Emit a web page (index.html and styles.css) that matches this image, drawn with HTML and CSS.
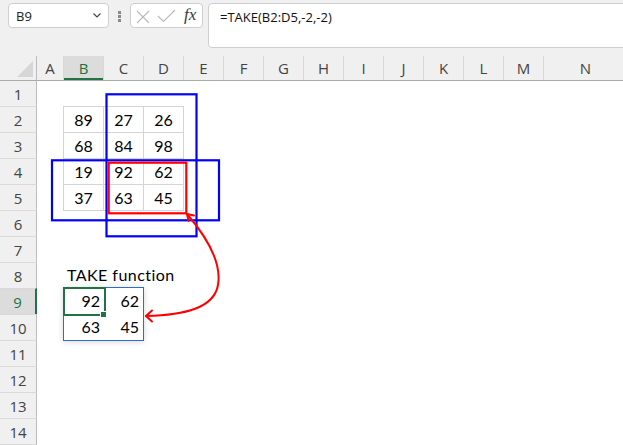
FILE: index.html
```html
<!DOCTYPE html>
<html>
<head>
<meta charset="utf-8">
<link rel="stylesheet" href="styles.css">
</head>
<body>
<div class="app">
  <div class="fbar">
    <div class="namebox">
      <span class="nbtext">B9</span>
      <svg class="chev" width="8" height="5" viewBox="0 0 8 5"><polyline points="0.5,0.5 4,4 7.5,0.5"/></svg>
    </div>
    <div class="dots"><i></i><i></i><i></i></div>
    <div class="fnbox">
      <svg class="xc" width="50" height="23" viewBox="0 0 50 23"><path d="M6 7 L18 19 M18 7 L6 19"/><path d="M27 12 L32.5 17.5 L44 6"/></svg>
      <span class="fx">fx</span>
    </div>
    <div class="formula">=TAKE(B2:D5,-2,-2)</div>
  </div>

  <div class="sheet">
    <div class="corner"><svg width="36" height="24" viewBox="0 0 36 24"><polygon points="33,5 33,21 17,21"/></svg></div>
    <div class="colheads">
      <div class="ch">A</div>
      <div class="ch sel">B</div>
      <div class="ch">C</div>
      <div class="ch">D</div>
      <div class="ch">E</div>
      <div class="ch">F</div>
      <div class="ch">G</div>
      <div class="ch">H</div>
      <div class="ch">I</div>
      <div class="ch">J</div>
      <div class="ch">K</div>
      <div class="ch">L</div>
      <div class="ch">M</div>
      <div class="ch">N</div>
    </div>
    <div class="rowheads">
      <div class="rh">1</div>
      <div class="rh">2</div>
      <div class="rh">3</div>
      <div class="rh">4</div>
      <div class="rh">5</div>
      <div class="rh">6</div>
      <div class="rh">7</div>
      <div class="rh">8</div>
      <div class="rh sel">9</div>
      <div class="rh">10</div>
      <div class="rh">11</div>
      <div class="rh">12</div>
      <div class="rh">13</div>
      <div class="rh">14</div>
      <div class="rh rh-empty"></div>
    </div>
    <div class="body">
      <div class="data">
        <div class="dc">89</div><div class="dc">27</div><div class="dc">26</div>
        <div class="dc">68</div><div class="dc">84</div><div class="dc">98</div>
        <div class="dc">19</div><div class="dc">92</div><div class="dc">62</div>
        <div class="dc">37</div><div class="dc">63</div><div class="dc">45</div>
      </div>
      <div class="label">TAKE function</div>
      <div class="spill">
        <div class="sc active">92</div><div class="sc">62</div>
        <div class="sc">63</div><div class="sc">45</div>
      </div>
    </div>
  </div>

  <svg class="overlay" width="623" height="445" viewBox="0 0 623 445">
    <rect class="blue" x="106.5" y="94.3" width="90" height="142"/>
    <rect class="blue" x="52" y="160.3" width="167" height="60"/>
    <rect class="red" x="108.7" y="162.7" width="77.6" height="50.6"/>
    <path class="arrow" d="M187 214 C205 235 222 262 218 285 C214 308 185 315 146 316"/>
    <polyline class="arrow" points="194,215.5 187,214 188.5,221"/>
    <polyline class="arrow" points="152,310.5 146,316 152,321.5"/>
  </svg>
</div>
</body>
</html>
```

FILE: styles.css
```css
html, body {
  margin: 0;
  padding: 0;
  background: #ffffff;
}

.app {
  position: relative;
  width: 623px;
  height: 445px;
  overflow: hidden;
  font-family: "Open Sans", "Noto Sans", sans-serif;
  color: #222;
}

/* ---------- formula bar ---------- */
.fbar {
  height: 56px;
  box-sizing: border-box;
  background: #f0f0f0;
  display: flex;
  align-items: flex-start;
  padding: 3px 0 0 8px;
  overflow: hidden;
}

.namebox {
  width: 101px;
  height: 25px;
  box-sizing: border-box;
  border: 1px solid #cfcfcf;
  border-radius: 4px;
  background: #fff;
  display: flex;
  align-items: center;
  justify-content: space-between;
  padding: 0 7px 0 7px;
  font-size: 13px;
  line-height: 18px;
  color: #222;
}

.chev polyline {
  fill: none;
  stroke: #444;
  stroke-width: 1.2;
}

.dots {
  width: 3px;
  margin: 0 9px;
  padding-top: 8px;
  display: flex;
  flex-direction: column;
  gap: 1.5px;
}

.dots i {
  display: block;
  width: 2.5px;
  height: 2.5px;
  background: #8a8a8a;
}

.fnbox {
  width: 73px;
  height: 25px;
  box-sizing: border-box;
  border: 1px solid #cfcfcf;
  border-radius: 4px;
  background: #fff;
  display: flex;
  align-items: flex-start;
}

.xc path {
  fill: none;
  stroke: #b9b9b9;
  stroke-width: 1.1;
}

.fx {
  margin-left: 3px;
  font-family: "Liberation Serif", "DejaVu Serif", serif;
  font-style: italic;
  font-size: 17px;
  line-height: 21px;
  color: #3a3a3a;
}

.formula {
  flex: 1;
  margin-left: 5px;
  margin-right: -8px;
  height: 45px;
  box-sizing: border-box;
  border: 1px solid #cfcfcf;
  border-radius: 4px;
  background: #fff;
  padding: 4px 11px 0 11px;
  font-size: 13px;
  line-height: 18px;
  color: #111;
}

/* ---------- sheet ---------- */
.sheet {
  --cols: 26px repeat(12, 40px) 84px;
  display: grid;
  grid-template-columns: 37px 1fr;
  grid-template-rows: 25px 1fr;
  height: 389px;
}

.corner {
  background: #f0f0f0;
  box-sizing: border-box;
  border-right: 1px solid #bcbcbc;
  border-bottom: 1px solid #ababab;
}

.corner svg {
  display: block;
}

.corner polygon {
  fill: #d6d6d6;
}

.colheads {
  display: grid;
  grid-template-columns: var(--cols);
  background: #f0f0f0;
  box-sizing: border-box;
  border-bottom: 1px solid #ababab;
  overflow: hidden;
}

.ch {
  box-sizing: border-box;
  border-left: 1px solid #d8d8d8;
  display: flex;
  align-items: center;
  justify-content: center;
  font-size: 15px;
  color: #444;
}

.ch:first-child {
  border-left: none;
}

.ch.sel {
  background: #dcdcdc;
  color: #217346;
  box-shadow: inset 0 -2px 0 #217346;
}

.rowheads {
  display: flex;
  flex-direction: column;
  background: #f0f0f0;
}

.rh {
  flex: none;
  height: 26px;
  box-sizing: border-box;
  border-top: 1px solid #dadada;
  border-right: 1px solid #bcbcbc;
  display: flex;
  align-items: center;
  justify-content: center;
  font-size: 15px;
  color: #444;
}

.rh:first-child {
  height: 25px;
  border-top: none;
}

.rh.sel {
  background: #dcdcdc;
  color: #217346;
  border-right: 2px solid #217346;
}

.body {
  display: grid;
  grid-template-columns: var(--cols);
  grid-template-rows: 25px repeat(14, 26px);
  background: #fff;
  font-family: "Lato", "Carlito", sans-serif;
  font-size: 16px;
  color: #000;
}

.data {
  grid-column: 2 / 5;
  grid-row: 2 / 6;
  justify-self: start;
  align-self: start;
  width: 121px;
  height: 105px;
  box-sizing: border-box;
  padding: 1px;
  gap: 1px;
  background: #d4d4d4;
  display: grid;
  grid-template-columns: repeat(3, 39px);
  grid-template-rows: repeat(4, 25px);
}

.dc {
  background: #fff;
  text-align: center;
  line-height: 25px;
}

.label {
  grid-column: 2 / 7;
  grid-row: 8;
  padding-left: 4px;
  line-height: 26px;
  letter-spacing: 0.45px;
  white-space: nowrap;
}

.spill {
  grid-column: 2 / 4;
  grid-row: 9 / 11;
  justify-self: start;
  align-self: start;
  width: 81px;
  height: 54px;
  margin-top: -1px;
  box-sizing: border-box;
  border: 1px solid #2f6ec6;
  box-shadow: 0 1px 6px rgba(0, 0, 0, 0.16);
  display: grid;
  grid-template-columns: 40px 39px;
  grid-template-rows: 26px 26px;
  background: #fff;
}

.sc {
  text-align: right;
  padding-right: 4px;
  line-height: 26px;
}

.sc.active {
  position: relative;
}

.sc.active::before {
  content: "";
  position: absolute;
  left: -1px;
  top: -1px;
  right: -2px;
  bottom: -2px;
  border: 2px solid #217346;
}

.sc.active::after {
  content: "";
  position: absolute;
  right: -3px;
  bottom: -4px;
  width: 5px;
  height: 5px;
  background: #217346;
  border: 1px solid #fff;
}

/* ---------- overlay drawing ---------- */
.overlay {
  position: absolute;
  left: 0;
  top: 0;
  pointer-events: none;
}

.overlay .blue {
  fill: none;
  stroke: #0000ff;
  stroke-width: 2.2;
}

.overlay .red {
  fill: none;
  stroke: #ff0000;
  stroke-width: 2.2;
}

.overlay .arrow {
  fill: none;
  stroke: #ff0000;
  stroke-width: 2;
  stroke-linecap: round;
  stroke-linejoin: round;
}
```
